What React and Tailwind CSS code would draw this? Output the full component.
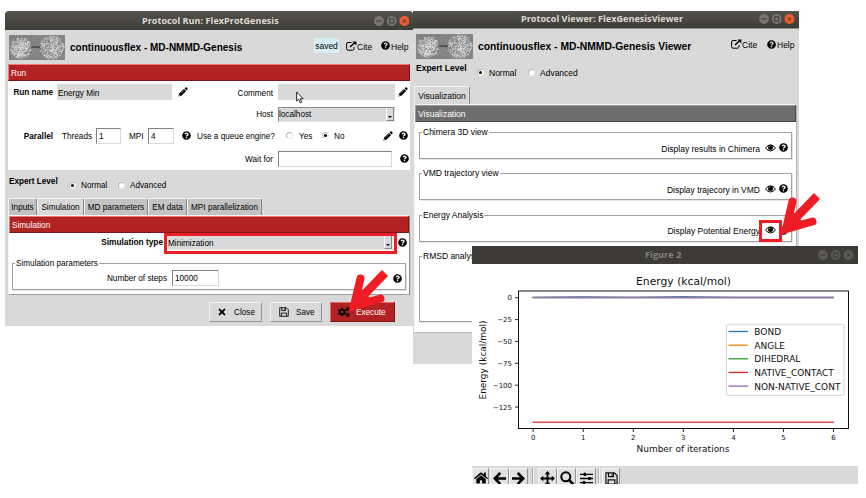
import React from "react";
import { FaQuestionCircle, FaHome, FaArrowLeft, FaArrowRight, FaTimes, FaCogs } from "react-icons/fa";

function rng(seed) {
  let s = seed;
  return () => {
    s = (s * 16807) % 2147483647;
    return s / 2147483647;
  };
}

function makeGrain() {
  const r = rng(77);
  const out = [];
  for (let i = 0; i < 420; i++) {
    out.push({ x: r() * 56, y: r() * 25, c: r() > 0.5 ? "#a0a0a0" : "#6a6a6a", o: 0.5, s: 0.9 });
  }
  [[12, 13, 10.5], [43, 12.5, 12]].forEach(([cx, cy, R]) => {
    for (let i = 0; i < 480; i++) {
      const a = r() * Math.PI * 2;
      const d = Math.pow(r(), 0.6) * R;
      out.push({ x: cx + Math.cos(a) * d - 0.5, y: cy + Math.sin(a) * d - 0.5, c: r() > 0.22 ? "#e6e6e6" : "#8b8b8b", o: 0.7, s: 1 });
    }
  });
  return out;
}
const grain = makeGrain();

const Thumb = ({ className }) => (
  <svg viewBox="0 0 56 25" preserveAspectRatio="none" className={className}>
    <rect width="56" height="25" fill="#858585" />
    {grain.map((g, i) => (
      <rect key={i} x={g.x} y={g.y} width={g.s} height={g.s} fill={g.c} opacity={g.o} />
    ))}
    <path d="M22 12h9" stroke="#222" strokeWidth="1" />
  </svg>
);

const Help = ({ className = "" }) => <FaQuestionCircle className={"size-[9px] shrink-0 text-black " + className} />;

const Pencil = ({ className = "" }) => (
  <svg viewBox="0 0 10 10" className={"size-[10px] shrink-0 " + className}>
    <path d="M.4 9.6 1.2 6.6 5.9 1.9 8.1 4.1 3.4 8.8Z" fill="#000" />
    <path d="M6.5 1.3 7.5.4Q8.1 0 8.7.6L9.5 1.4Q9.9 2 9.4 2.6L8.6 3.4Z" fill="#000" />
    <path d="M2.4 6.7 6 3.2" stroke="#aaa" strokeWidth=".5" />
    <circle cx="1.7" cy="8.2" r=".5" fill="#fff" />
  </svg>
);

const Eye = () => (
  <svg viewBox="0 0 11 8" className="h-[8px] w-[11px] shrink-0">
    <path d="M.5 4Q5.5-2.4 10.5 4Q5.500 10 .5 4Z" fill="#fff" stroke="#000" strokeWidth="1" />
    <circle cx="5.500" cy="3.500" r="2.500" fill="#000" />
    <path d="M4.100 3.500Q4.200 2.200 5.500 2.100" fill="none" stroke="#fff" strokeWidth=".5" />
  </svg>
);

const External = () => (
  <svg viewBox="0 0 11 10" className="h-[10px] w-[11px] shrink-0">
    <path d="M5.500 1.500H2Q.6 1.500.6 3V7.700Q.6 9.200 2 9.200H6.500Q8 9.200 8 7.700V6" fill="none" stroke="#000" strokeWidth="1" />
    <path d="M4 6 8.600 1.800" stroke="#000" strokeWidth="1.500" />
    <path d="M6.400.4H10.400V4.400Z" fill="#000" />
  </svg>
);

const Floppy = ({ className }) => (
  <svg viewBox="0 0 14 14" className={className} fill="none" stroke="#111" strokeWidth="1.300">
    <path d="M1 1H10.200L13 3.800V13H1Z" />
    <path d="M3.800 1V5H9.200V1M3.400 13V8.500H10.600V13" />
    <path d="M7.600 2V4" />
  </svg>
);

const Radio = ({ on, className = "" }) => (
  <span className={"flex size-[7px] shrink-0 items-center justify-center rounded-full border border-[#b4b4b4] border-r-[#ececec] border-b-[#ececec] bg-white " + className}>
    {on && <span className="size-[3px] rounded-full bg-black" />}
  </span>
);

/* Label text sits one pixel below the row's optical centre. */
const L = ({ className = "", bold, children }) => (
  <span className={"pt-[2px] " + (bold ? "font-bold " : "") + className}>{children}</span>
);

function WinButtons({ dim, className = "" }) {
  return (
    <svg viewBox="0 0 38 12" className={"h-[12px] w-[38px] shrink-0 " + className}>
      <circle cx="6" cy="6" r="4.900" fill={dim ? "#5b5a56" : "#777670"} />
      <circle cx="18.700" cy="6" r="4.900" fill={dim ? "#5b5a56" : "#777670"} />
      <circle cx="31.400" cy="6" r="5" fill={dim ? "#5b5a56" : "#ef5b2d"} />
      <g stroke={dim ? "#383733" : "#3c3b37"} strokeWidth="1" fill="none">
        <path d="M3.500 6H8.500" />
        <rect x="16.600" y="3.900" width="4.200" height="4.200" />
        <path d="M29.700 4.300 33.100 7.700M33.100 4.300 29.700 7.700" />
      </g>
    </svg>
  );
}

const Arrow = ({ className }) => (
  <svg viewBox="0 0 46 48" className={className}>
    <g fill="none" stroke="#ee1c25" strokeWidth="8">
      <path d="M16.500 9.500 10 37 36.500 29.500" strokeLinecap="round" strokeMiterlimit="8" />
      <path d="M41 4 12 34" strokeWidth="8.500" />
    </g>
    <path d="M15 18 7 40 28 31Z" fill="#ee1c25" />
  </svg>
);

const Tab = ({ active, className, children }) => (
  <div className={"flex h-full items-center justify-center rounded-t-[2px] border-t border-r border-l border-t-[#f4f4f4] border-r-[#858585] border-l-[#f4f4f4] whitespace-nowrap " + (active ? "bg-[#d9d9d9] " : "bg-[#c3c3c3] ") + className}>
    {children}
  </div>
);

const Bar = ({ className = "", children }) => (
  <div className={"flex items-center border pl-[2px] text-white " + className}><L>{children}</L></div>
);

function Group({ title, className, children }) {
  return (
    <fieldset className={"min-w-0 border border-[#a2a2a2] shadow-[1px_1px_0_#e4e4e4] " + className}>
      <legend className="ml-[2px] h-[9px] px-px leading-[9px] whitespace-nowrap">{title}</legend>
      {children}
    </fieldset>
  );
}

const Select = ({ className, children }) => (
  <div className={"flex items-stretch justify-between border border-t-[#8a8a8a] border-r-[#e8e8e8] border-b-[#e8e8e8] border-l-[#8a8a8a] bg-[#d9d9d9] " + className}>
    <span className="flex items-center"><L>{children}</L></span>
    <span className="flex w-[8px] items-end justify-center border-r border-b border-l border-r-[#888] border-b-[#888] border-l-[#fff] pb-[2px]">
      <svg viewBox="0 0 4 2" className="h-[2px] w-[4px]"><path d="M0 0H4L2 2Z" /></svg>
    </span>
  </div>
);

const Input = ({ className, children }) => (
  <div className={"flex items-center border border-t-[#828282] border-r-[#dadada] border-b-[#dadada] border-l-[#828282] bg-white pl-[2px] " + className}><L>{children}</L></div>
);

const Title = ({ className, children }) => (
  <div className={"flex shrink-0 items-center font-['Open_Sans','Noto_Sans',sans-serif] font-bold whitespace-nowrap " + className}>{children}</div>
);

function RunWindow() {
  return (
    <section className="absolute top-[11px] left-[5px] flex h-[315px] w-[408px] flex-col overflow-hidden rounded-t-[4px] bg-[#d9d9d9]">
      <Title className="h-[19px] bg-linear-to-b from-[#55534b] to-[#3c3b37] text-[9px] text-[#dfdbd2]">
        <span className="ml-[137px] w-[231px] tracking-[0.06px]">Protocol Run: FlexProtGenesis</span>
        <WinButtons />
      </Title>
      <div className="flex h-[34px] shrink-0 items-center pl-[4px]">
        <Thumb className="h-[25px] w-[56px]" />
        <h1 className="ml-[5px] w-[244px] pt-[2px] text-[10px] font-bold">continuousflex - MD-NMMD-Genesis</h1>
        <span className="mb-[3px] flex h-[15px] w-[25px] items-center justify-center bg-[#d8eef6] pt-px text-[8.500px]">saved</span>
        <span className="mb-[3px] ml-[7px] flex w-[35px] items-center text-[8.500px]"><External /><L>Cite</L></span>
        <span className="mb-[3px] flex items-center text-[8.500px]"><Help className="mr-px" /><L>Help</L></span>
      </div>
      <Bar className="mr-[3px] ml-[3px] h-[17px] shrink-0 border-t-[#f07a7a] border-r-[#7c1515] border-b-[#7c1515] border-l-[#f07a7a] bg-[#b22222]">Run</Bar>
      <div className="mx-[3px] h-[89px] shrink-0 bg-white pt-[3px]">
        <div className="flex h-[16px] items-center">
          <L bold className="w-[45px] text-right">Run name</L>
          <div className="ml-[4px] flex h-[16px] w-[115px] items-center bg-[#d9d9d9] pl-[1px]"><L className="pt-[3px]">Energy Min</L></div>
          <Pencil className="ml-[6px]" />
          <L className="w-[85px] pt-[3px] text-right">Comment</L>
          <div className="ml-[5px] h-[16px] w-[117px] bg-[#d9d9d9]" />
          <Pencil className="ml-[3px]" />
        </div>
        <div className="mt-[6px] flex h-[16px] items-center">
          <L className="w-[265px] text-right">Host</L>
          <Select className="ml-[5px] h-[15px] w-[117px]">localhost</Select>
        </div>
        <div className="mt-[5px] flex h-[17px] items-center">
          <L bold className="w-[45px] text-right">Parallel</L>
          <L className="ml-[9px] w-[34px]">Threads</L>
          <Input className="h-[16px] w-[25px]">1</Input>
          <L className="ml-[8px] w-[19px]">MPI</L>
          <Input className="h-[16px] w-[26px]">4</Input>
          <Help className="ml-[8px]" />
          <L className="ml-[6px] w-[89px]">Use a queue engine?</L>
          <Radio />
          <L className="ml-[6px] w-[23px]">Yes</L>
          <Radio on />
          <L className="ml-[5px] w-[49px]">No</L>
          <Pencil />
          <Help className="ml-[6px]" />
        </div>
        <div className="mt-[6px] flex h-[17px] items-center">
          <L className="w-[265px] text-right">Wait for</L>
          <Input className="ml-[5px] h-[16px] w-[114px]" />
          <Help className="ml-[8px]" />
        </div>
      </div>
      <div className="flex h-[28px] shrink-0 items-start pl-[4px]">
        <b className="mt-[7px] w-[60px]">Expert Level</b>
        <div className="mt-[9px] flex items-center">
          <Radio on /><L className="ml-[5px] w-[37px]">Normal</L>
          <Radio /><L className="ml-[5px]">Advanced</L>
        </div>
      </div>
      <div className="flex h-[17px] shrink-0 pl-[3px]">
        <Tab className="w-[29px] pt-[2px]">Inputs</Tab>
        <Tab active className="w-[47px] pt-[2px]">Simulation</Tab>
        <Tab className="w-[64px] pt-[2px]">MD parameters</Tab>
        <Tab className="w-[39px] pt-[2px]">EM data</Tab>
        <Tab className="w-[75px] pt-[2px]">MPI parallelization</Tab>
      </div>
      <div className="mr-[3px] ml-[3px] h-[80px] shrink-0 border border-t-[#f4f4f4] border-r-[#858585] border-b-[#a0a0a0] border-l-[#f4f4f4] bg-white">
        <Bar className="h-[17px] border-t-[#f07a7a] border-r-[#7c1515] border-b-[#7c1515] border-l-[#f07a7a] bg-[#b22222]">Simulation</Bar>
        <div className="flex h-[20px] items-center">
          <b className="w-[154px] pb-[2px] text-right text-[8.300px]">Simulation type</b>
          <div className="ml-px flex h-[21px] w-[233px] items-center border-[3px] border-[#ee1c25] p-px">
            <Select className="h-[14px] w-[225px] border-t-0 border-l-0">Minimization</Select>
          </div>
          <Help className="mb-[2px] ml-px" />
        </div>
        <Group title="Simulation parameters" className="mt-[6px] mr-[3px] ml-[3px] h-[31px]">
          <div className="flex h-[20px] items-center">
            <L className="w-[154px] text-right">Number of steps</L>
            <Input className="ml-[5px] h-[16px] w-[47px]">10000</Input>
            <Help className="ml-[174px]" />
          </div>
        </Group>
      </div>
      <div className="flex h-[31px] items-center pt-[2px] pl-[204px]">
        {[["Close", "w-[53px]"], ["Save", "w-[52px]"]].map(([t, w]) => (
          <div key={t} className={"mr-[8px] flex h-[20px] items-center border border-t-[#f4f4f4] border-r-[#929292] border-b-[#929292] border-l-[#f4f4f4] " + w}>
            {t === "Close" ? <FaTimes className="ml-[7px] size-[10px] text-black" /> : <Floppy className="ml-[8px] size-[10px]" />}
            <L className="ml-[7px]">{t}</L>
          </div>
        ))}
        <div className="flex h-[20px] w-[65px] items-center border border-t-[#e66] border-r-[#7c1515] border-b-[#7c1515] border-l-[#e66] bg-[#b22222] text-white">
          <FaCogs className="ml-[7px] size-[12px] text-black" />
          <L className="ml-[6px]">Execute</L>
        </div>
      </div>
    </section>
  );
}

function ViewerWindow() {
  const rows = [
    ["Chimera 3D view", "Display results in Chimera"],
    ["VMD trajectory view", "Display trajecory in VMD"],
    ["Energy Analysis", "Display Potential Energy"],
  ];
  return (
    <section className="absolute top-[11px] left-[413px] flex h-[353px] w-[386px] flex-col overflow-hidden bg-[#d9d9d9] text-[8.500px]">
      <Title className="h-[18px] border-b border-[#8c8b87] bg-linear-to-b from-[#55534b] to-[#3c3b37] text-[9px] text-[#dfdbd2]">
        <span className="ml-[108px] w-[237px] -translate-y-px tracking-[0.06px]">Protocol Viewer: FlexGenesisViewer</span>
        <WinButtons className="-translate-y-px" />
      </Title>
      <div className="flex h-[34px] shrink-0 items-center pl-[3px]">
        <Thumb className="h-[25px] w-[57px]" />
        <h1 className="ml-[5px] w-[253px] pt-[2px] text-[10.300px] font-bold">continuousflex - MD-NMMD-Genesis Viewer</h1>
        <span className="mb-[4px] flex w-[36px] items-center"><External /><L>Cite</L></span>
        <span className="mb-[4px] flex items-center"><Help className="mr-px" /><L>Help</L></span>
      </div>
      <div className="flex h-[23px] shrink-0 items-start pl-[3px]">
        <b className="w-[61px]">Expert Level</b>
        <div className="mt-[3px] flex items-center">
          <Radio on /><L className="ml-[5px] w-[39px]">Normal</L>
          <Radio /><L className="ml-[5px]">Advanced</L>
        </div>
      </div>
      <div className="flex h-[18px] shrink-0 pl-[1px]">
        <Tab active className="w-[56px]">Visualization</Tab>
      </div>
      <div className="mr-[2px] ml-[1px] h-[229px] shrink-0 border border-t-[#f4f4f4] border-r-[#b4b4b4] border-b-[#b4b4b4] border-l-[#f4f4f4] bg-white">
        <Bar className="h-[17px] border-t-[#9a9a9a] border-r-[#444] border-b-[#444] border-l-[#9a9a9a] bg-[#6d6d6d] [&>span]:pt-0">Visualization</Bar>
        <div className="flex flex-col gap-[10.300px] pt-[6px] pr-[4px] pl-[4px]">
          {rows.map(([title, label]) => (
            <Group key={title} title={title} className="h-[31px]">
              <div className="flex h-[21px] items-center justify-end pr-[3px]">
                <L>{label}</L>
                <span className="mr-[3px] ml-[5px] flex"><Eye /></span>
                <Help />
              </div>
            </Group>
          ))}
          <Group title="RMSD analysis" className="h-[70px]" />
        </div>
      </div>
    </section>
  );
}

const series = [
  ["BOND", "#1f77b4"],
  ["ANGLE", "#ff7f0e"],
  ["DIHEDRAL", "#2ca02c"],
  ["NATIVE_CONTACT", "#d62728"],
  ["NON-NATIVE_CONT", "#9467bd"],
];

function Chart() {
  return (
    <svg viewBox="472 264 386 202" className="block h-[202px] w-[386px] bg-white font-['DejaVu_Sans',sans-serif]" fill="#111">
      <text x="683.500" y="285" fontSize="11.300" textAnchor="middle" textLength="95" lengthAdjust="spacingAndGlyphs">Energy (kcal/mol)</text>
      <rect x="518.500" y="291" width="330" height="137.500" fill="none" stroke="#111" strokeWidth="1" />
      {[0, 25, 50, 75, 100, 125].map((v) => (
        <g key={v}>
          <path d={`M515 ${297.700 + v * 0.875}h3.500`} stroke="#111" strokeWidth=".9" />
          <text x="512" y={300.200 + v * 0.875} fontSize="7" textAnchor="end">{v ? "−" + v : "0"}</text>
        </g>
      ))}
      {[0, 1, 2, 3, 4, 5, 6].map((v) => (
        <g key={v}>
          <path d={`M${533.200 + v * 50.050} 428.500v3.500`} stroke="#111" strokeWidth=".9" />
          <text x={533.200 + v * 50.050} y="440" fontSize="7" textAnchor="middle">{v}</text>
        </g>
      ))}
      <text x="683" y="452" fontSize="9.200" textAnchor="middle" textLength="93" lengthAdjust="spacingAndGlyphs">Number of iterations</text>
      <text transform="translate(486 360) rotate(-90)" fontSize="9.200" textAnchor="middle" textLength="79" lengthAdjust="spacingAndGlyphs">Energy (kcal/mol)</text>
      <path d="M532.500 297.500 583 296.800 633 297.500 683 296.600 733 297.500H834" fill="none" stroke="#1f77b4" strokeWidth="1.200" />
      <path d="M532.500 297.500H834" stroke="#8c7a9c" strokeWidth="1.800" />
      <path d="M532.500 422.200H834" stroke="#dd4f50" strokeWidth="1.600" />
      <rect x="726.500" y="324.300" width="117.500" height="71" rx="1.500" fill="#fff" stroke="#d6d6d6" />
      {series.map(([name, color], i) => (
        <g key={name}>
          <path d={`M728.500 ${331.500 + i * 13.650}h19.500`} stroke={color} strokeWidth="1.300" />
          <text x="754.300" y={334.900 + i * 13.650} fontSize="9">{name}</text>
        </g>
      ))}
    </svg>
  );
}

const ToolButton = ({ className = "", children }) => (
  <div className={"flex h-[20px] items-center justify-center border border-t-[#f6f6f6] border-r-[#909090] border-b-[#909090] border-l-[#f6f6f6] bg-[#e2e2e2] text-black " + className}>{children}</div>
);

function FigureWindow() {
  return (
    <section className="absolute top-[246px] left-[472px] flex h-[238px] w-[386px] flex-col overflow-hidden bg-white">
      <Title className="h-[18px] bg-[#3c3b37] text-[9px] text-[#85837c]">
        <span className="ml-[173px] w-[172px] tracking-[0.1px]">Figure 2</span>
        <WinButtons dim />
      </Title>
      <Chart />
      <div className="flex h-[18px] shrink-0 bg-[#d9d9d9] pt-[2px]">
        <ToolButton className="w-[17px]"><FaHome className="size-[14px]" /></ToolButton>
        <ToolButton className="ml-px w-[19px]">
          <svg viewBox="0 0 13 13" className="size-[13px] shrink-0" fill="none" stroke="#000" strokeWidth="2.700"><path d="M1.500 6.500H13M7.300.9 1.900 6.500 7.300 12.100" /></svg>
        </ToolButton>
        <ToolButton className="w-[19px]">
          <svg viewBox="0 0 13 13" className="size-[13px] shrink-0" fill="none" stroke="#000" strokeWidth="2.700"><path d="M11.500 6.500H0M5.700.9 11.100 6.500 5.700 12.100" /></svg>
        </ToolButton>
        <div className="mx-[4px] w-[2px] border-r border-l border-r-[#f4f4f4] border-l-[#aaa]" />
        <ToolButton className="w-[19px]">
          <svg viewBox="0 0 16 16" className="size-[15px] shrink-0">
            <path d="M8 2V14M2 8H14" stroke="#000" strokeWidth="2" />
            <path d="M8 0 11 3.500H5ZM8 16 5 12.500H11ZM0 8 3.500 5V11ZM16 8 12.500 11V5Z" />
          </svg>
        </ToolButton>
        <ToolButton className="w-[19px]">
          <svg viewBox="0 0 14 14" className="size-[14px] shrink-0" fill="none" stroke="#000">
            <circle cx="5.800" cy="5.800" r="4.500" strokeWidth="2" />
            <path d="M9.200 9.200 13 13" strokeWidth="2.600" strokeLinecap="round" />
          </svg>
        </ToolButton>
        <ToolButton className="w-[20px]">
          <svg viewBox="0 0 14 14" className="size-[13px] shrink-0">
            <path d="M0 2.500H14M0 7H14M0 11.500H14" stroke="#000" strokeWidth="1.400" />
            <path d="M4 .8h2.500v3.400H4ZM9 5.300h2.500v3.400H9ZM3 9.800h2.500v3.400H3Z" />
          </svg>
        </ToolButton>
        <div className="mx-[2px] w-[2px] border-r border-l border-r-[#f4f4f4] border-l-[#bbb]" />
        <ToolButton className="w-[18px]"><Floppy className="size-[13px]" /></ToolButton>
      </div>
    </section>
  );
}

export default function App() {
  return (
    <main className="relative h-[498px] w-[866px] overflow-hidden bg-white font-['Liberation_Sans',Arial,sans-serif] text-[8.200px] leading-[10px] whitespace-nowrap text-black">
      <RunWindow />
      <ViewerWindow />
      <FigureWindow />
      <svg viewBox="0 0 9 14" className="absolute top-[91px] left-[296px] h-[13px] w-[8px]">
        <path d="M.7.800V11L3 8.900 4.700 13 6.400 12.300 4.800 8.400H8Z" fill="#fff" stroke="#111" strokeWidth="1" />
      </svg>
      <div className="absolute top-[220px] left-[759px] h-[22px] w-[23px] border-[3px] border-[#ee1c25]" />
      <Arrow className="absolute top-[269px] left-[344px] h-[48px] w-[46px]" />
      <Arrow className="absolute top-[192px] left-[776px] h-[48px] w-[46px]" />
    </main>
  );
}
